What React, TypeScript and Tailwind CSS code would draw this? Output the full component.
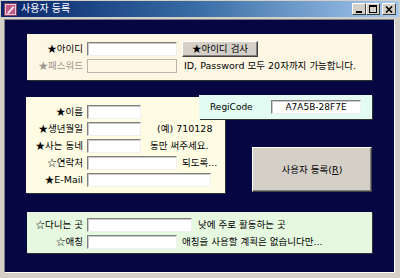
import type { ReactNode } from "react";

const font = "font-['DejaVu_Sans','Noto_Sans_CJK_KR',sans-serif]";

// stars come from the CJK face so they get their full width
function Label({ text }: { text: string }) {
  const first = text.charAt(0);
  if (first === "★" || first === "☆") {
    return (
      <>
        <span className="font-['Noto_Sans_CJK_KR',sans-serif]">{first}</span>
        {text.slice(1)}
      </>
    );
  }
  return <>{text}</>;
}

function Box({
  className,
  children,
  disabled,
}: {
  className: string;
  children?: ReactNode;
  disabled?: boolean;
}) {
  return (
    <div
      className={`${className} h-[14px] shrink-0 border ${
        disabled
          ? "border-[#b8b4ac] bg-transparent"
          : "border-t-[#808080] border-l-[#808080] border-r-[#f0f0f0] border-b-[#f0f0f0] bg-white shadow-[inset_1px_1px_0_#c8c8c8]"
      } flex items-center justify-center`}
    >
      {children}
    </div>
  );
}

function Row({
  label,
  labelWidth,
  muted,
  children,
}: {
  label: string;
  labelWidth: string;
  muted?: boolean;
  children: ReactNode;
}) {
  return (
    <div className="flex h-[17px] items-center">
      <div
        className={`${labelWidth} shrink-0 whitespace-nowrap text-right ${
          muted ? "text-[#9a968e]" : "text-black"
        }`}
      >
        <Label text={label} />
      </div>
      <div className="ml-[4px] flex items-center whitespace-nowrap">{children}</div>
    </div>
  );
}

function RaisedButton({
  className,
  children,
}: {
  className: string;
  children: ReactNode;
}) {
  return (
    <div
      className={`${className} flex items-center justify-center bg-[#d4d0c8] border border-t-white border-l-white border-r-[#404040] border-b-[#404040] shadow-[inset_-1px_-1px_0_#808080]`}
    >
      {children}
    </div>
  );
}

function CaptionButton({ children }: { children: ReactNode }) {
  return (
    <div className="flex h-[12px] w-[14px] items-center justify-center bg-[#d4d0c8] border border-t-white border-l-white border-r-[#404040] border-b-[#404040]">
      {children}
    </div>
  );
}

export default function App() {
  return (
    <div
      className={`${font} flex h-[278px] w-[400px] flex-col bg-[#d4d0c8] p-[1px] text-[9.5px] leading-none`}
    >
      {/* title bar */}
      <div className="flex h-[16px] items-center bg-gradient-to-r from-[#0a246a] via-[#3a6ea5] to-[#a6caf0] pl-[3px] pr-[3px]">
        <svg width="13" height="13" viewBox="0 0 13 13">
          <rect x="0.5" y="0.5" width="12" height="12" fill="#e8c8d8" stroke="#804060" />
          <rect x="2" y="2" width="9" height="9" fill="#c05888" />
          <path d="M3 10 L9 3 L10.5 4.5 L4.5 11 Z" fill="#f4e0ea" />
        </svg>
        <span className="ml-[4px] text-[10px] text-white">사용자 등록</span>
        <div className="ml-auto flex items-center">
          <CaptionButton>
            <div className="mt-[5px] h-[2px] w-[6px] bg-black" />
          </CaptionButton>
          <CaptionButton>
            <div className="h-[8px] w-[8px] border border-t-2 border-black" />
          </CaptionButton>
          <div className="ml-[2px]">
            <CaptionButton>
              <svg width="8" height="7" viewBox="0 0 8 7">
                <path d="M1 0.5 L7 6.5 M7 0.5 L1 6.5" stroke="black" strokeWidth="1.6" />
              </svg>
            </CaptionButton>
          </div>
        </div>
      </div>

      {/* client area */}
      <div className="flex-1 pl-[3px] pr-[4px] pt-[2px] pb-[4px]">
        <div className="h-full border border-t-[#808080] border-l-[#808080] border-r-white border-b-white bg-[#060642] pl-[22px] pt-[14px]">
          {/* account panel */}
          <div className="h-[46px] w-[345px] bg-[#fdf6e3] pt-[6px] shadow-[1px_1px_0_#303030]">
            <Row label="★아이디" labelWidth="w-[56px]">
              <Box className="w-[90px]" />
              <RaisedButton className="ml-[5px] h-[16px] w-[76px]">
                <Label text="★아이디 검사" />
              </RaisedButton>
            </Row>
            <Row label="★패스워드" labelWidth="w-[56px]" muted>
              <Box className="w-[90px]" disabled />
              <span className="ml-[7px]">ID, Password 모두 20자까지 가능합니다.</span>
            </Row>
          </div>

          {/* personal panel + code + submit */}
          <div className="relative mt-[17px] flex h-[96px] w-[345px] items-end justify-between">
            <div className="-ml-[1px] h-[96px] w-[199px] self-start bg-[#fefde4] pt-[6px] shadow-[1px_1px_0_#303030]">
              <Row label="★이름" labelWidth="w-[57px]">
                <Box className="w-[54px]" />
              </Row>
              <Row label="★생년월일" labelWidth="w-[57px]">
                <Box className="w-[54px]" />
                <span className="ml-[16px]">(예) 710128</span>
              </Row>
              <Row label="★사는 동네" labelWidth="w-[57px]">
                <Box className="w-[54px]" />
                <span className="ml-[9px]">동만 써주세요.</span>
              </Row>
              <Row label="☆연락처" labelWidth="w-[57px]">
                <Box className="w-[90px]" />
                <span className="ml-[5px]">되도록...</span>
              </Row>
              <Row label="★E-Mail" labelWidth="w-[57px]">
                <Box className="w-[124px]" />
              </Row>
            </div>

            <RaisedButton className="mb-[1px] h-[45px] w-[120px]">
              <span>
                사용자 등록(<span className="underline">R</span>)
              </span>
            </RaisedButton>

            <div className="absolute right-0 top-[-2px] flex h-[24px] w-[173px] items-center justify-between bg-[#e2fcf4] pl-[11px] pr-[11px] shadow-[1px_1px_0_#303030]">
              <span className="text-[9px]">RegiCode</span>
              <Box className="w-[90px]">
                <span className="text-[9px]">A7A5B-28F7E</span>
              </Box>
            </div>
          </div>

          {/* extra panel */}
          <div className="mt-[19px] h-[41px] w-[345px] bg-[#e6f9e0] pt-[4px] shadow-[1px_1px_0_#303030]">
            <Row label="☆다니는 곳" labelWidth="w-[56px]">
              <Box className="w-[105px]" />
              <span className="ml-[6px]">낮에 주로 활동하는 곳</span>
            </Row>
            <Row label="☆애칭" labelWidth="w-[56px]">
              <Box className="w-[90px]" />
              <span className="ml-[5px]">애칭을 사용할 계획은 없습니다만...</span>
            </Row>
          </div>
        </div>
      </div>
    </div>
  );
}
